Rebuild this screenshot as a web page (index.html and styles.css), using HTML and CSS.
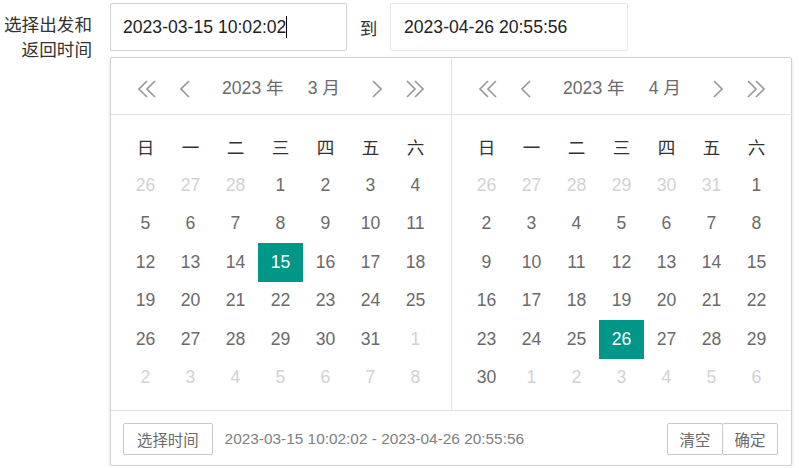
FILE: index.html
```html
<!DOCTYPE html>
<html lang="zh-CN">
<head>
    <meta charset="UTF-8">
    <title>选择出发和返回时间</title>
    <link rel="stylesheet" href="styles.css">
</head>
<body>
    <div class="form-item">
        <label class="form-label">选择出发和返回时间</label>
        <div class="form-body">
            <div class="range-inputs">
                <div class="input focused">2023-03-15 10:02:02<span class="caret"></span></div>
                <span class="range-sep">到</span>
                <div class="input">2023-04-26 20:55:56</div>
            </div>

            <div class="laydate">
                <div class="laydate-panels">
                    <!-- left month -->
                    <div class="laydate-main">
                        <div class="laydate-header">
                            <span class="nav-btn"><svg width="20" height="18" viewBox="0 0 20 18"><polyline points="10,1 2,9 10,17"/><polyline points="18,1 10,9 18,17"/></svg></span>
                            <span class="nav-btn"><svg width="10" height="18" viewBox="0 0 10 18"><polyline points="9,1 1,9 9,17"/></svg></span>
                            <div class="laydate-title"><span>2023 年</span><span>3 月</span></div>
                            <span class="nav-btn"><svg width="10" height="18" viewBox="0 0 10 18"><polyline points="1,1 9,9 1,17"/></svg></span>
                            <span class="nav-btn"><svg width="20" height="18" viewBox="0 0 20 18"><polyline points="2,1 10,9 2,17"/><polyline points="10,1 18,9 10,17"/></svg></span>
                        </div>
                        <div class="laydate-content">
                            <span class="wk">日</span><span class="wk">一</span><span class="wk">二</span><span class="wk">三</span><span class="wk">四</span><span class="wk">五</span><span class="wk">六</span>
                            <span class="day other">26</span><span class="day other">27</span><span class="day other">28</span><span class="day">1</span><span class="day">2</span><span class="day">3</span><span class="day">4</span>
                            <span class="day">5</span><span class="day">6</span><span class="day">7</span><span class="day">8</span><span class="day">9</span><span class="day">10</span><span class="day">11</span>
                            <span class="day">12</span><span class="day">13</span><span class="day">14</span><span class="day selected">15</span><span class="day">16</span><span class="day">17</span><span class="day">18</span>
                            <span class="day">19</span><span class="day">20</span><span class="day">21</span><span class="day">22</span><span class="day">23</span><span class="day">24</span><span class="day">25</span>
                            <span class="day">26</span><span class="day">27</span><span class="day">28</span><span class="day">29</span><span class="day">30</span><span class="day">31</span><span class="day other">1</span>
                            <span class="day other">2</span><span class="day other">3</span><span class="day other">4</span><span class="day other">5</span><span class="day other">6</span><span class="day other">7</span><span class="day other">8</span>
                        </div>
                    </div>

                    <!-- right month -->
                    <div class="laydate-main">
                        <div class="laydate-header">
                            <span class="nav-btn"><svg width="20" height="18" viewBox="0 0 20 18"><polyline points="10,1 2,9 10,17"/><polyline points="18,1 10,9 18,17"/></svg></span>
                            <span class="nav-btn"><svg width="10" height="18" viewBox="0 0 10 18"><polyline points="9,1 1,9 9,17"/></svg></span>
                            <div class="laydate-title"><span>2023 年</span><span>4 月</span></div>
                            <span class="nav-btn"><svg width="10" height="18" viewBox="0 0 10 18"><polyline points="1,1 9,9 1,17"/></svg></span>
                            <span class="nav-btn"><svg width="20" height="18" viewBox="0 0 20 18"><polyline points="2,1 10,9 2,17"/><polyline points="10,1 18,9 10,17"/></svg></span>
                        </div>
                        <div class="laydate-content">
                            <span class="wk">日</span><span class="wk">一</span><span class="wk">二</span><span class="wk">三</span><span class="wk">四</span><span class="wk">五</span><span class="wk">六</span>
                            <span class="day other">26</span><span class="day other">27</span><span class="day other">28</span><span class="day other">29</span><span class="day other">30</span><span class="day other">31</span><span class="day">1</span>
                            <span class="day">2</span><span class="day">3</span><span class="day">4</span><span class="day">5</span><span class="day">6</span><span class="day">7</span><span class="day">8</span>
                            <span class="day">9</span><span class="day">10</span><span class="day">11</span><span class="day">12</span><span class="day">13</span><span class="day">14</span><span class="day">15</span>
                            <span class="day">16</span><span class="day">17</span><span class="day">18</span><span class="day">19</span><span class="day">20</span><span class="day">21</span><span class="day">22</span>
                            <span class="day">23</span><span class="day">24</span><span class="day">25</span><span class="day selected">26</span><span class="day">27</span><span class="day">28</span><span class="day">29</span>
                            <span class="day">30</span><span class="day other">1</span><span class="day other">2</span><span class="day other">3</span><span class="day other">4</span><span class="day other">5</span><span class="day other">6</span>
                        </div>
                    </div>
                </div>

                <div class="laydate-footer">
                    <span class="btn">选择时间</span>
                    <span class="footer-range">2023-03-15 10:02:02 - 2023-04-26 20:55:56</span>
                    <div class="footer-btns">
                        <span class="btn">清空</span><span class="btn">确定</span>
                    </div>
                </div>
            </div>
        </div>
    </div>
</body>
</html>
```

FILE: styles.css
```css
:root {
    --text-main: #333;
    --text-day: #6a6a6a;
    --text-muted: #d2d2d2;
    --text-footer: #808080;
    --arrow: #999;
    --accent: #009688;
    --border-input: #e6e6e6;
    --border-focus: #d2d2d2;
    --border-line: #e2e2e2;
}

body {
    margin: 0;
    padding: 3px 0 0 0;
    font-family: "Liberation Sans", "Noto Sans CJK SC", Arial, sans-serif;
    color: var(--text-main);
    background: #fff;
}

.form-item {
    display: flex;
    align-items: flex-start;
}

.form-label {
    width: 92px;
    margin-right: 18px;
    padding-top: 10px;
    text-align: right;
    font-size: 17.6px;
    line-height: 25px;
    color: var(--text-main);
}

.form-body {
    display: flex;
    flex-direction: column;
}

/* --- Range inputs --- */
.range-inputs {
    display: flex;
    align-items: center;
}

.input {
    box-sizing: border-box;
    width: 237px;
    height: 48px;
    padding-left: 12px;
    border: 1px solid var(--border-input);
    border-radius: 2px;
    display: flex;
    align-items: center;
    font-size: 17.6px;
    color: #222;
}
.input.focused {
    border-color: var(--border-focus);
}
.input:last-child {
    width: 238px;
    padding-left: 13px;
}

.caret {
    display: inline-block;
    width: 1px;
    height: 22px;
    background: #000;
}

.range-sep {
    width: 43px;
    text-align: center;
    font-size: 17.6px;
    color: var(--text-main);
}

/* --- Date popup --- */
.laydate {
    width: 682px;
    box-sizing: border-box;
    margin-top: 6px;
    border: 1px solid var(--border-focus);
    border-radius: 2px;
    box-shadow: 0 2px 4px rgba(0, 0, 0, 0.12);
    background: #fff;
}

.laydate-panels {
    display: flex;
}

.laydate-main {
    width: 340px;
}
.laydate-main + .laydate-main {
    border-left: 1px solid var(--border-line);
}

.laydate-header {
    height: 56px;
    padding: 0 21px;
    display: flex;
    align-items: center;
    gap: 8px;
    border-bottom: 1px solid var(--border-line);
}

.nav-btn {
    width: 30px;
    display: flex;
    justify-content: center;
    padding-top: 5px;
}
.nav-btn svg {
    fill: none;
    stroke: var(--arrow);
    stroke-width: 1.7;
}

.laydate-title {
    flex: 1;
    display: flex;
    justify-content: center;
    gap: 24px;
    font-size: 17.6px;
    color: var(--text-day);
}

.laydate-content {
    display: grid;
    grid-template-columns: repeat(7, 45px);
    grid-auto-rows: 38.5px;
    padding: 12.5px 13px 13px 12px;
}

.wk,
.day {
    display: flex;
    align-items: center;
    justify-content: center;
    font-size: 17.6px;
}
.wk {
    color: var(--text-main);
}
.day {
    color: var(--text-day);
}
.day.other {
    color: var(--text-muted);
}
.day.selected {
    background: var(--accent);
    color: #fff;
}

/* --- Footer --- */
.laydate-footer {
    height: 55px;
    box-sizing: border-box;
    padding: 12px 13px 0 12px;
    border-top: 1px solid var(--border-line);
    display: flex;
    align-items: flex-start;
}

.btn {
    box-sizing: border-box;
    height: 32px;
    padding: 0 13px;
    border: 1px solid #c9c9c9;
    border-radius: 2px;
    display: inline-flex;
    align-items: center;
    font-size: 15.4px;
    color: var(--text-day);
    background: #fff;
}

.footer-range {
    margin-left: 12px;
    line-height: 32px;
    font-size: 15.4px;
    color: var(--text-footer);
}

.footer-btns {
    margin-left: auto;
    display: flex;
}
.footer-btns .btn {
    width: 56px;
    justify-content: center;
    padding: 0;
}
.footer-btns .btn + .btn {
    margin-left: -1px;
}
```
